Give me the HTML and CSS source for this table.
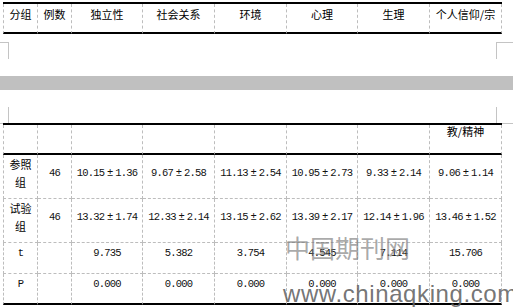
FILE: index.html
```html
<!DOCTYPE html>
<html lang="zh">
<head>
<meta charset="utf-8">
<title>表格</title>
<link rel="stylesheet" href="styles.css">
</head>
<body>
<div class="doc">
  <section class="page page-1">
    <table class="grid grid-head">
      <tr>
        <th class="c1">分组</th>
        <th class="c2">例数</th>
        <th class="c3">独立性</th>
        <th class="c4">社会关系</th>
        <th class="c5">环境</th>
        <th class="c6">心理</th>
        <th class="c7">生理</th>
        <th class="c8">个人信仰/宗</th>
      </tr>
    </table>
    <div class="marks marks-bottom">
      <span class="mark mark-l"></span>
      <span class="mark mark-r"></span>
    </div>
  </section>

  <div class="page-gap"></div>

  <section class="page page-2">
    <div class="marks marks-top">
      <span class="mark mark-l"></span>
      <span class="mark mark-r"></span>
    </div>
    <table class="grid grid-body">
      <tr class="row-cont">
        <td class="c1"></td>
        <td class="c2"></td>
        <td class="c3"></td>
        <td class="c4"></td>
        <td class="c5"></td>
        <td class="c6"></td>
        <td class="c7"></td>
        <td class="c8 cn">教/精神</td>
      </tr>
      <tr class="row-two">
        <td class="cn">参照<br>组</td>
        <td class="num">46</td>
        <td class="num">10.15<span class="pm">±</span>1.36</td>
        <td class="num">9.67<span class="pm">±</span>2.58</td>
        <td class="num">11.13<span class="pm">±</span>2.54</td>
        <td class="num">10.95<span class="pm">±</span>2.73</td>
        <td class="num">9.33<span class="pm">±</span>2.14</td>
        <td class="num">9.06<span class="pm">±</span>1.14</td>
      </tr>
      <tr class="row-two">
        <td class="cn">试验<br>组</td>
        <td class="num">46</td>
        <td class="num">13.32<span class="pm">±</span>1.74</td>
        <td class="num">12.33<span class="pm">±</span>2.14</td>
        <td class="num">13.15<span class="pm">±</span>2.62</td>
        <td class="num">13.39<span class="pm">±</span>2.17</td>
        <td class="num">12.14<span class="pm">±</span>1.96</td>
        <td class="num">13.46<span class="pm">±</span>1.52</td>
      </tr>
      <tr class="row-one">
        <td class="num">t</td>
        <td class="num"></td>
        <td class="num">9.735</td>
        <td class="num">5.382</td>
        <td class="num">3.754</td>
        <td class="num">4.545</td>
        <td class="num">7.114</td>
        <td class="num">15.706</td>
      </tr>
      <tr class="row-one row-last">
        <td class="num">P</td>
        <td class="num"></td>
        <td class="num">0.000</td>
        <td class="num">0.000</td>
        <td class="num">0.000</td>
        <td class="num">0.000</td>
        <td class="num">0.000</td>
        <td class="num">0.000</td>
      </tr>
    </table>
  </section>

  <div class="wm wm-cn">中国期刊网</div>
  <div class="wm wm-url">www.chinaqking.com</div>
</div>
</body>
</html>
```

FILE: styles.css
```css
html, body {
  margin: 0;
  padding: 0;
  background: #fff;
}

.doc {
  position: relative;
  width: 513px;
  height: 307px;
  overflow: hidden;
  font-family: "Noto Sans CJK SC", "Liberation Sans", sans-serif;
  font-size: 11px;
  color: #000;
}

.page {
  background: #fff;
}

.page-1 {
  height: 76px;
  padding-top: 2px;
  box-sizing: border-box;
}

.page-gap {
  height: 14px;
  background: #c0c0c0;
}

.page-2 {
  padding-top: 17px;
}

/* corner marks of the page margins */
.marks {
  display: flex;
  justify-content: space-between;
}

.marks-bottom {
  margin-top: 8px;
}

.mark {
  display: block;
  box-sizing: border-box;
  height: 17px;
  border: 0 solid #c4c4c4;
}

.mark-l { width: 9px; }
.mark-r { width: 17px; }

.marks-bottom .mark { border-top-width: 1px; }
.marks-bottom .mark-l { border-right-width: 1px; }
.marks-bottom .mark-r { border-left-width: 1px; }

.marks-top .mark { border-bottom-width: 1px; }
.marks-top .mark-l { border-right-width: 1px; }
.marks-top .mark-r { border-left-width: 1px; }

/* tables */
.grid {
  margin-left: 3px;
  width: 499px;
  table-layout: fixed;
  border-collapse: separate;
  border-spacing: 0;
  border-top: 2px solid #000;
}

.grid-body {
  margin-top: -1px;
  position: relative;
}

.grid th,
.grid td {
  box-sizing: border-box;
  padding: 0;
  text-align: center;
  vertical-align: middle;
  font-weight: normal;
  white-space: nowrap;
  border-right: 1px dashed #bdbdbd;
  border-bottom: 1px dashed #bdbdbd;
}

.grid th:first-child,
.grid td:first-child {
  border-left: 1px dashed #bdbdbd;
}

.c1 { width: 35px; }
.c2 { width: 34px; }
.c3 { width: 71px; }
.c4 { width: 72px; }
.c5 { width: 72px; }
.c6 { width: 71px; }
.c7 { width: 72px; }
.c8 { width: 72px; }

.grid-head th {
  padding-top: 1px;
  padding-bottom: 9px;
  line-height: 18px;
  border-bottom: 2px solid #000;
}

.row-cont td {
  padding-top: 0;
  padding-bottom: 16px;
  line-height: 12px;
  border-bottom: 2px solid #000;
  vertical-align: top;
}

.row-two td {
  padding-top: 0;
  padding-bottom: 7px;
  line-height: 18px;
}

.row-one td {
  padding-top: 1px;
  padding-bottom: 11px;
  line-height: 18px;
}

.grid .row-last td {
  padding-bottom: 10px;
  border-bottom: 2px solid #000;
}

.num {
  font-family: "Liberation Mono", "DejaVu Sans Mono", monospace;
  font-size: 10.5px;
  letter-spacing: -0.8px;
  color: #111;
}

.pm {
  margin: 0 2.75px;
}

/* watermark over the table */
.wm {
  position: absolute;
  white-space: nowrap;
  pointer-events: none;
}

.wm-cn {
  left: 285px;
  top: 235px;
  font-family: "Noto Sans CJK SC", sans-serif;
  font-size: 25px;
  line-height: 25px;
  color: rgba(120, 120, 120, 0.65);
}

.wm-url {
  left: 283px;
  top: 282px;
  font-family: "Liberation Sans", Arial, sans-serif;
  font-size: 24px;
  line-height: 23px;
  letter-spacing: 0.6px;
  color: rgba(100, 100, 100, 0.9);
}
```
